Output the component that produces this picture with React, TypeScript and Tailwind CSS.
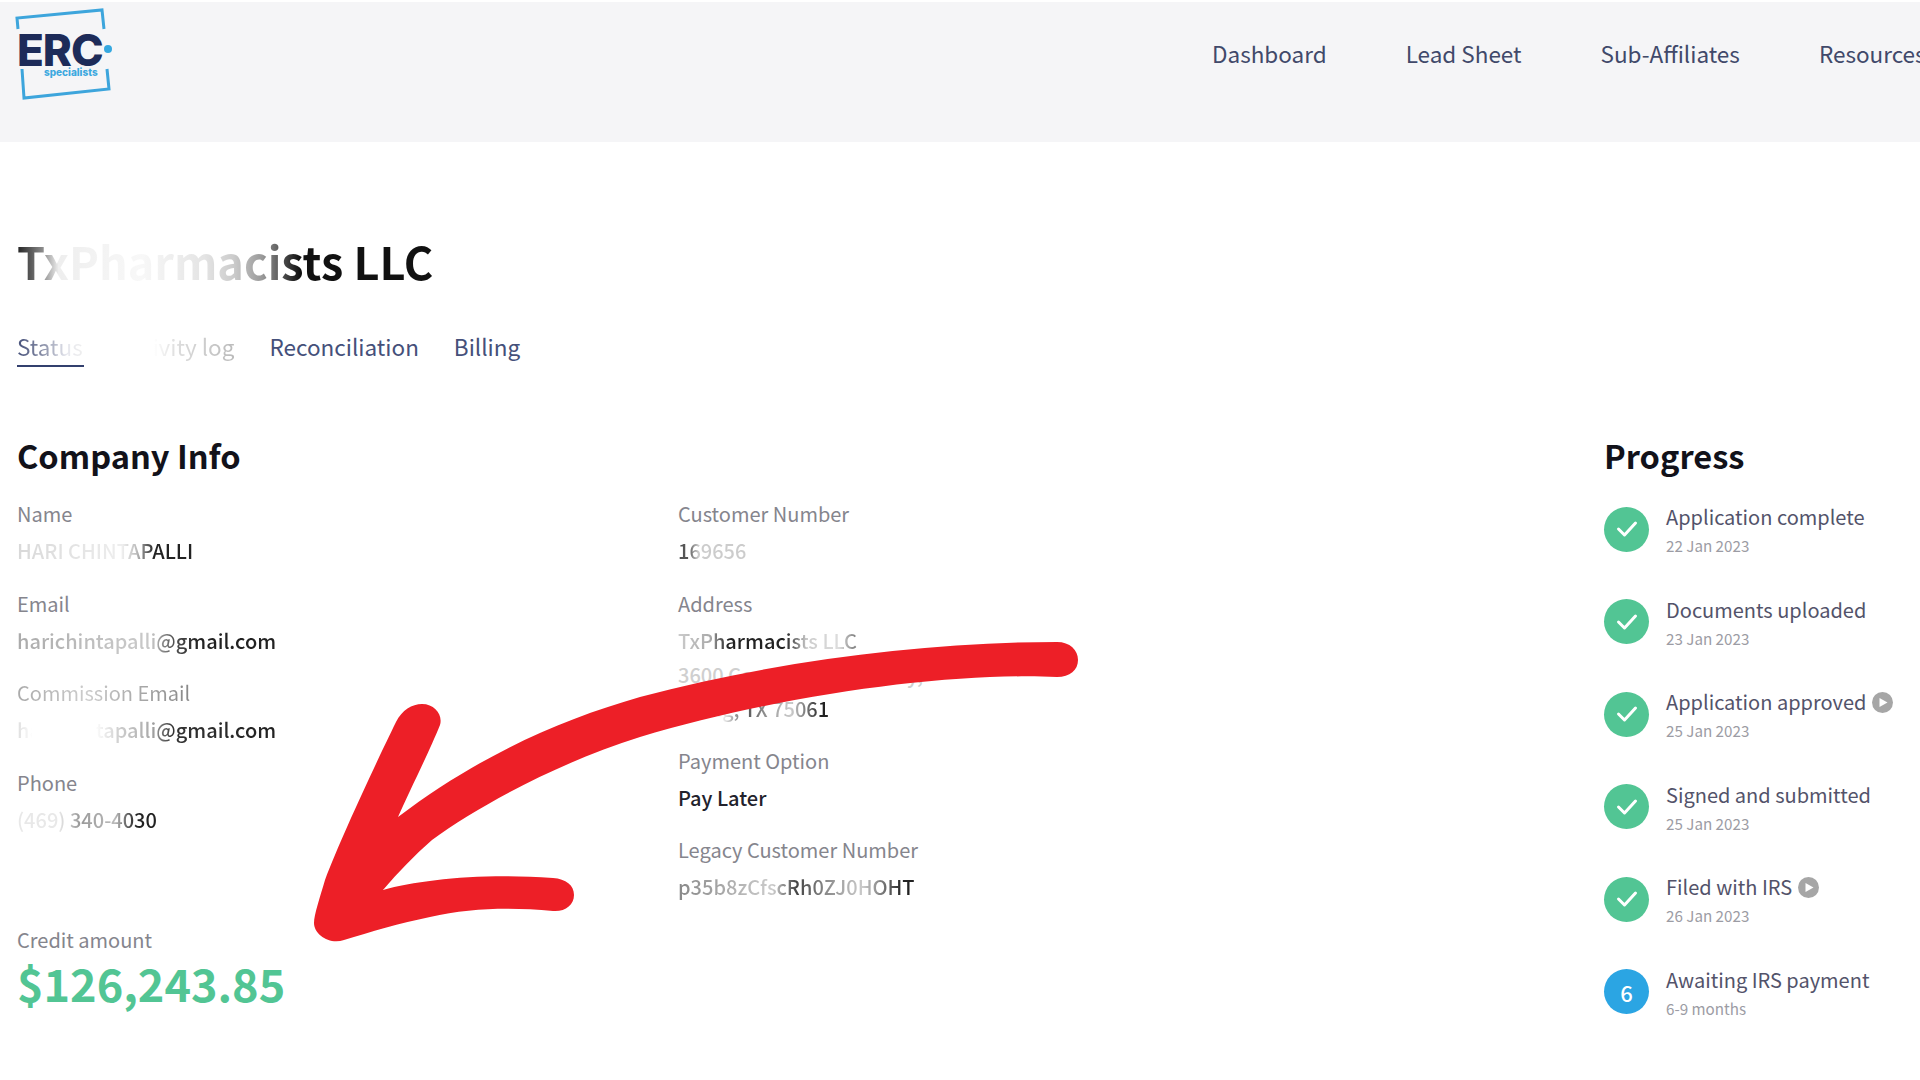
const font = "font-['Noto_Sans_CJK_SC','Source_Sans_Pro','Noto_Sans',sans-serif]";

function Logo() {
  return (
    <svg width="130" height="110" viewBox="0 0 130 110" className="shrink-0 -mt-[1px]">
      <g fill="none" stroke="#3da5dc" strokeWidth="3">
        <path d="M18 28 L17 17 L102 9 L104 28" />
        <path d="M22 68 L24 97 L109 88 L107 68" />
      </g>
      <text x="17" y="65" fontFamily="Inter, sans-serif" fontWeight="800" fontSize="44" letterSpacing="-1" fill="#1d2b59">ERC</text>
      <circle cx="108" cy="48" r="4" fill="#35a8e0" />
      <text x="44" y="75" fontFamily="Inter, sans-serif" fontWeight="800" fontSize="10" fill="#3da9df">specialists</text>
    </svg>
  );
}

function Field({ label, labelClass = "text-[#85858d]", children }: { label: string; labelClass?: string; children: React.ReactNode }) {
  return (
    <div className="h-[89.6px]">
      <div className={`text-[20px] leading-[30px] ${labelClass}`}>{label}</div>
      <div className="mt-[7px] text-[20px] leading-[30px] font-medium">{children}</div>
    </div>
  );
}

function Fade({ g, children }: { g: string; children: React.ReactNode }) {
  return <span className={`inline-block bg-clip-text text-transparent ${g}`}>{children}</span>;
}

function Check() {
  return (
    <div className="w-[45px] h-[45px] rounded-full bg-[#52c594] flex items-center justify-center shrink-0">
      <svg width="22" height="18" viewBox="0 0 22 18" fill="none" stroke="#ffffff" strokeWidth="3" strokeLinecap="round" strokeLinejoin="round">
        <path d="M2.5 9 L8.5 15 L19.5 3" />
      </svg>
    </div>
  );
}

function Play() {
  return (
    <svg width="21" height="21" viewBox="0 0 21 21" className="shrink-0 ml-[6px]">
      <circle cx="10.5" cy="10.5" r="10.5" fill="#a6a6a6" />
      <path d="M7.5 6 L15.5 10.5 L7.5 15 Z" fill="#ffffff" strokeLinejoin="round" />
    </svg>
  );
}

function Step({ title, date, play, num }: { title: string; date: string; play?: boolean; num?: string }) {
  return (
    <div className="h-[92.5px] flex items-center gap-[17px]">
      {num ? (
        <div className="w-[45px] h-[45px] rounded-full bg-[#2ba5e3] flex items-center justify-center shrink-0 text-white text-[22px] font-medium leading-none">{num}</div>
      ) : (
        <Check />
      )}
      <div className="pt-[1px]">
        <div className="flex items-center text-[20px] leading-[30px] text-[#53536a] whitespace-nowrap">
          {title}
          {play ? <Play /> : null}
        </div>
        <div className="text-[15.2px] leading-[24px] mt-[1px] text-[#9c9ca4]">{date}</div>
      </div>
    </div>
  );
}

export default function App() {
  return (
    <div className={`relative w-[1920px] h-[1080px] overflow-hidden bg-white ${font}`}>
      <header className="mt-[2px] h-[140px] bg-[#f5f5f7] flex items-start">
        <Logo />
        <nav className="ml-[1082px] mt-[35px] flex gap-[79px] text-[22.5px] leading-[32px] text-[#41496a] whitespace-nowrap">
          <span>Dashboard</span>
          <span>Lead Sheet</span>
          <span>Sub-Affiliates</span>
          <span>Resources</span>
        </nav>
      </header>

      <main className="pl-[17px]">
        <h1 className="mt-[86px] text-[45px] leading-[66px] font-bold">
          <Fade g="bg-[linear-gradient(90deg,#222_0%,#888_6%,#eee_10%,#f8f8f8_30%,#e4e4e4_45%,#ccc_52%,#999_59%,#111_68%,#111_100%)]">TxPharmacists LLC</Fade>
        </h1>

        <div className="mt-[35px] flex gap-[35px] text-[22.5px] leading-[34px] text-[#45507a]">
          <div className="w-[67px] border-b-2 border-[#33406e] pb-[2px]">
            <Fade g="bg-[linear-gradient(90deg,#45507a_0%,#8a90a8_40%,#e6e7ee_75%,#eee_100%)]">Status</Fade>
          </div>
          <Fade g="bg-[linear-gradient(90deg,#fff_0%,#fff_30%,#ddd_50%,#bbb_100%)]">Activity log</Fade>
          <span>Reconciliation</span>
          <span>Billing</span>
        </div>

        <div className="mt-[63px] flex">
          <section className="w-[661px] shrink-0">
            <h2 className="text-[32.6px] leading-[50px] font-bold text-[#12121a]">Company Info</h2>
            <div className="mt-[19px]">
              <Field label="Name">
                <Fade g="bg-[linear-gradient(90deg,#d8d8d8_0%,#e6e6e6_40%,#eee_60%,#bbb_68%,#222_78%,#222_100%)]">HARI CHINTAPALLI</Fade>
              </Field>
              <Field label="Email">
                <Fade g="bg-[linear-gradient(90deg,#aaa_0%,#c6c6c6_40%,#c8c8c8_52%,#555_60%,#222_70%,#222_100%)]">harichintapalli@gmail.com</Fade>
              </Field>
              <Field label="Commission Email" labelClass="bg-[linear-gradient(90deg,#aaa_0%,#ccc_40%,#888_100%)] bg-clip-text text-transparent w-fit">
                <Fade g="bg-[linear-gradient(90deg,#ddd_0%,#fff_6%,#fff_30%,#ccc_40%,#aaa_52%,#333_60%,#222_100%)]">harichintapalli@gmail.com</Fade>
              </Field>
              <Field label="Phone">
                <Fade g="bg-[linear-gradient(90deg,#e8e8e8_0%,#e8e8e8_30%,#999_45%,#bbb_70%,#222_85%,#222_100%)]">(469) 340-4030</Fade>
              </Field>
            </div>
            <div className="mt-[68px] text-[20px] leading-[30px] text-[#85858d]">Credit amount</div>
            <div className="text-[45px] leading-[56px] font-bold text-[#52c594]">$126,243.85</div>
          </section>

          <section className="flex-1 pt-[69px]">
            <Field label="Customer Number">
              <Fade g="bg-[linear-gradient(90deg,#555_0%,#555_15%,#ccc_30%,#ccc_100%)]">169656</Fade>
            </Field>
            <div className="h-[157px]">
              <div className="text-[20px] leading-[30px] text-[#85858d]">Address</div>
              <div className="mt-[5px] text-[20px] leading-[34px] font-medium">
                <div><Fade g="bg-[linear-gradient(90deg,#ccc_0%,#aaa_18%,#222_28%,#222_60%,#ccc_72%,#ddd_90%,#777_100%)]">TxPharmacists LLC</Fade></div>
                <div className="text-[#cfcfcf]">3600 Commerce Parkway,</div>
                <div><Fade g="bg-[linear-gradient(90deg,#fff_0%,#eee_30%,#555_45%,#999_60%,#ccc_75%,#222_95%,#222_100%)]">Irving, TX 75061</Fade></div>
              </div>
            </div>
            <Field label="Payment Option">
              <span className="text-[#22222c]">Pay Later</span>
            </Field>
            <Field label="Legacy Customer Number">
              <Fade g="bg-[linear-gradient(90deg,#888_0%,#ccc_40%,#444_50%,#888_62%,#ccc_78%,#222_95%)]">p35b8zCfscRh0ZJ0HOHT</Fade>
            </Field>
          </section>

          <section className="w-[316px] shrink-0">
            <h2 className="text-[32.6px] leading-[50px] font-bold text-[#12121a]">Progress</h2>
            <div className="mt-[3px]">
              <Step title="Application complete" date="22 Jan 2023" />
              <Step title="Documents uploaded" date="23 Jan 2023" />
              <Step title="Application approved" date="25 Jan 2023" play />
              <Step title="Signed and submitted" date="25 Jan 2023" />
              <Step title="Filed with IRS" date="26 Jan 2023" play />
              <Step title="Awaiting IRS payment" date="6-9 months" num="6" />
            </div>
          </section>
        </div>
      </main>

      <svg className="absolute left-0 top-0 pointer-events-none" width="1920" height="1080" viewBox="0 0 1920 1080">
        <path
          fill="#ed1f27"
          d="M1057 642 C1070 642 1078 650 1078 660 C1078 670 1070 677 1057 677 C950 672 780 695 640 737 C560 762 480 805 432 840 C415 855 398 872 383 890 C420 880 480 873 553 878 C566 879 574 885 574 895 C574 905 565 912 553 911 C510 907 470 908 430 917 C400 923 370 932 344 940 C330 945 314 935 314 923 C314 915 320 897 325 880 C340 840 375 765 396 722 C402 710 412 704 422 704 C435 704 443 715 440 725 C430 750 410 790 398 817 C480 755 560 720 640 697 C780 660 930 642 1057 642 Z"
        />
      </svg>
    </div>
  );
}
